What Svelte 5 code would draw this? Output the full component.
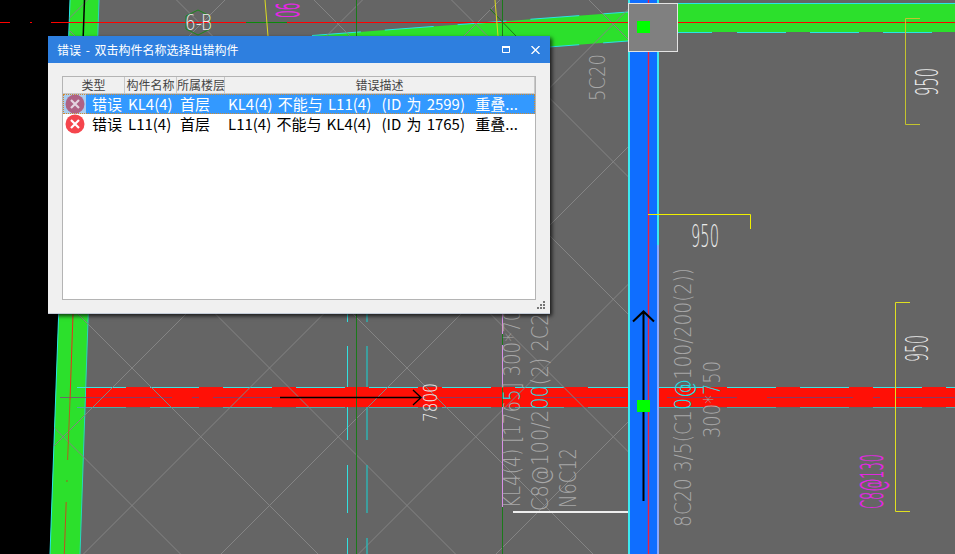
<script>
    const rows = [
        { name: "KL4(4)", floor: "首层", desc: "KL4(4) 不能与 L11(4)  (ID 为 2599)  重叠...", selected: true },
        { name: "L11(4)", floor: "首层", desc: "L11(4) 不能与 KL4(4)  (ID 为 1765)  重叠...", selected: false },
    ];

    // diagonal reinforcement lattice, 137.5px period
    const lattice = [];
    for (let k = -6; k <= 3; k++) {
        const c = 236 + 137.5 * k;
        lattice.push({ x1: 0, y1: c, x2: 700, y2: c + 700 });
    }
    for (let k = -3; k <= 7; k++) {
        const c = 500 + 137.5 * k;
        lattice.push({ x1: 0, y1: c, x2: 700, y2: c - 700 });
    }
</script>

<div class="stage">
    <svg class="drawing" viewBox="0 0 955 554" width="955" height="554">
        <defs>
            <clipPath id="left-of-column">
                <polygon points="70,0 628,0 628,554 50,554" />
            </clipPath>
        </defs>

        <rect width="955" height="554" fill="#656565" />
        <polygon points="0,0 70,0 50,554 0,554" fill="#000" />

        <!-- green beams -->
        <polygon points="70,0 99,0 80,554 50,554" fill="#2ce02c" />
        <line x1="70" y1="0" x2="50" y2="554" stroke="#27e6e6" />
        <line x1="99" y1="0" x2="80" y2="554" stroke="#27d8c0" />
        <polygon points="312,35.5 628,12 628,41 312,65" fill="#2ce02c" />
        <line x1="312" y1="35.5" x2="628" y2="12" stroke="#27e6e6" stroke-dasharray="49 24" />
        <line x1="312" y1="65" x2="628" y2="41" stroke="#27e6e6" stroke-dasharray="49 24" />
        <rect x="678" y="3" width="277" height="29" fill="#2ce02c" />
        <line x1="678" y1="3.5" x2="955" y2="3.5" stroke="#27e6e6" />
        <line x1="678" y1="32.5" x2="955" y2="32.5" stroke="#27e6e6" stroke-dasharray="34 25 49 24 49 24 49 24 49 24" />

        <!-- red beam -->
        <rect x="86" y="387" width="542" height="20" fill="#ff1006" />
        <rect x="659" y="387" width="296" height="20" fill="#ff1006" />
        <g stroke-dasharray="49 24">
            <line x1="77" y1="387.5" x2="628" y2="387.5" stroke="#3ce0e0" />
            <line x1="77" y1="407.5" x2="628" y2="407.5" stroke="#4ea8a8" />
            <line x1="654" y1="387.5" x2="955" y2="387.5" stroke="#3ce0e0" />
            <line x1="654" y1="407.5" x2="955" y2="407.5" stroke="#4ea8a8" />
        </g>
        <line x1="60" y1="397.5" x2="86" y2="397.5" stroke="#6a6a6a" />
        <line x1="86" y1="397.5" x2="955" y2="397.5" stroke="#8a3a60" stroke-dasharray="86 20 7 14 70 30" />

        <!-- lattice -->
        <g clip-path="url(#left-of-column)" stroke="#848484" stroke-width="1">
            {#each lattice as l}
                <line x1={l.x1} y1={l.y1} x2={l.x2} y2={l.y2} />
            {/each}
        </g>

        <!-- axis lines -->
        <line x1="0" y1="22.5" x2="10" y2="22.5" stroke="#f00" />
        <line x1="30" y1="22.5" x2="32" y2="22.5" stroke="#f00" />
        <line x1="51" y1="22.5" x2="628" y2="22.5" stroke="#f00" />
        <line x1="678" y1="22.5" x2="955" y2="22.5" stroke="#f00" />
        <line x1="246" y1="22.5" x2="287" y2="22.5" stroke="#0a8a0a" />
        <line x1="84.5" y1="0" x2="83.2" y2="36" stroke="#000" stroke-width="1.5" />
        <line x1="73" y1="314" x2="70" y2="400" stroke="#e8301c" />
        <line x1="70" y1="400" x2="67.6" y2="460" stroke="#b06020" />
        <line x1="67" y1="480" x2="66.9" y2="482" stroke="#a06020" />
        <line x1="66.2" y1="502" x2="64.3" y2="554" stroke="#c05020" />

        <line x1="356.5" y1="0" x2="356.5" y2="36" stroke="#1a7a1a" />
        <line x1="502.5" y1="0" x2="502.5" y2="36" stroke="#1a7a1a" />
        <line x1="490" y1="9" x2="516" y2="36" stroke="#1a7a1a" />
        <line x1="265" y1="0" x2="268" y2="36" stroke="#dcdc20" />
        <line x1="495" y1="0" x2="498" y2="36" stroke="#dcdc20" />
        <polygon points="198,10 210,16 210,29 198,35 186,29 186,16" fill="none" stroke="#1a8a1a" />

        <!-- dashed stirrup lines -->
        <g stroke="#33e0e0">
            <line x1="347.5" y1="314" x2="347.5" y2="322" />
            <line x1="347.5" y1="346" x2="347.5" y2="387" />
            <line x1="347.5" y1="407" x2="347.5" y2="440" />
            <line x1="347.5" y1="465" x2="347.5" y2="513" />
            <line x1="347.5" y1="538" x2="347.5" y2="554" />
        </g>
        <g stroke="#30b0b0" stroke-width="1.5">
            <line x1="367" y1="314" x2="367" y2="322" />
            <line x1="367" y1="346" x2="367" y2="387" />
            <line x1="367" y1="407" x2="367" y2="440" />
            <line x1="367" y1="465" x2="367" y2="513" />
            <line x1="367" y1="538" x2="367" y2="554" />
        </g>
        <line x1="356.5" y1="314" x2="356.5" y2="554" stroke="#1a7a1a" />
        <line x1="502.5" y1="314" x2="502.5" y2="554" stroke="#1a7a1a" />
        <line x1="502.5" y1="314" x2="502.5" y2="508" stroke="#d890e8" stroke-dasharray="20 11 42 20 100" />

        <!-- blue column -->
        <rect x="628" y="0" width="31" height="554" fill="#0f6eff" />
        <line x1="629" y1="0" x2="629" y2="554" stroke="#3ce8f0" stroke-width="2" />
        <line x1="658" y1="0" x2="658" y2="245" stroke="#3ce8f0" stroke-width="2" />
        <line x1="658" y1="245" x2="658" y2="554" stroke="#8aa8ff" stroke-width="2" />
        <line x1="648.5" y1="0" x2="648.5" y2="554" stroke="#f02040" stroke-width="1.4" />

        <rect x="628.5" y="3.5" width="49" height="48" fill="#808080" stroke="#e4e4e4" />
        <rect x="637" y="21" width="13" height="12" fill="#0f0" />

        <line x1="513" y1="512" x2="628" y2="512" stroke="#eee" stroke-width="2" />

        <!-- arrows -->
        <g fill="none" stroke="#000">
            <path d="M280 397.5H421M413 390l8 7.5-8 7.5" stroke-width="1.3" />
            <path d="M643.5 501V312M633 321.5l10.5-10 10.5 10" stroke-width="2" />
        </g>
        <rect x="637" y="400" width="13" height="12" fill="#0f0" />

        <!-- dimension brackets -->
        <path d="M920 18.5H905.5V124.5H920" fill="none" stroke="#c4c42e" />
        <path d="M910 302.5H895.5V511.5H910" fill="none" stroke="#e0e020" />
        <path d="M648 214.5H750.5V229" fill="none" stroke="#f0f000" />

        <!-- labels -->
        <text class="cad white" x="185" y="30" font-size="22" textLength="27" lengthAdjust="spacingAndGlyphs">6-B</text>
        <text class="cad white" x="691" y="247" font-size="32" textLength="28" lengthAdjust="spacingAndGlyphs">950</text>
        <text class="cad gray" transform="translate(605 101) rotate(-90)" font-size="22" textLength="47" lengthAdjust="spacingAndGlyphs">5C20</text>
        <text class="cad white" transform="translate(938 96) rotate(-90)" font-size="32" textLength="28" lengthAdjust="spacingAndGlyphs">950</text>
        <text class="cad white" transform="translate(928 362) rotate(-90)" font-size="32" textLength="27" lengthAdjust="spacingAndGlyphs">950</text>
        <text class="cad white" transform="translate(437 422) rotate(-90)" font-size="20" textLength="39" lengthAdjust="spacingAndGlyphs">7800</text>
        <text class="cad magenta" transform="translate(883 509) rotate(-90)" font-size="32" textLength="55" lengthAdjust="spacingAndGlyphs">C8@130</text>
        <text class="cad magenta" transform="translate(299 18) rotate(-90) scale(1 2.7)" font-size="12">06</text>
        <text class="cad gray" transform="translate(520 508) rotate(-90)" font-size="23" textLength="210" lengthAdjust="spacingAndGlyphs">KL4(4) [176<tspan class="cyan">5</tspan>] 300*700</text>
        <text class="cad gray" transform="translate(548 511) rotate(-90)" font-size="23" textLength="210" lengthAdjust="spacingAndGlyphs">C8@100/2<tspan class="cyan">00</tspan>(2) 2C22</text>
        <text class="cad gray" transform="translate(576 508) rotate(-90)" font-size="23" textLength="60" lengthAdjust="spacingAndGlyphs">N6C12</text>
        <text class="cad gray" transform="translate(691 527) rotate(-90)" font-size="23" textLength="259" lengthAdjust="spacingAndGlyphs">8C20 3/5(C1<tspan class="cyan">0@</tspan>100/200(2))</text>
        <text class="cad gray" transform="translate(720 438) rotate(-90)" font-size="23" textLength="77" lengthAdjust="spacingAndGlyphs">300*<tspan class="cyan">7</tspan>50</text>
    </svg>

    <div class="window">
        <div class="titlebar">
            <span class="title">错误 - 双击构件名称选择出错构件</span>
            <svg class="winbtn" viewBox="0 0 8 7" width="8" height="7">
                <path d="M.5 1.5h7v5h-7z" fill="none" stroke="#fff" />
                <rect width="8" height="2" fill="#fff" />
            </svg>
            <svg class="winbtn close" viewBox="0 0 9 8" width="9" height="8">
                <path d="M.5 0 8.5 8M8.5 0 .5 8" stroke="#fff" stroke-width="1.3" />
            </svg>
        </div>
        <div class="body">
            <div class="list">
                <div class="head">
                    <div class="th">类型</div>
                    <div class="th">构件名称</div>
                    <div class="th">所属楼层</div>
                    <div class="th">错误描述</div>
                </div>
                {#each rows as row}
                    <div class="row" class:selected={row.selected}>
                        <div class="icon-cell">
                            <svg viewBox="0 0 20 20" width="20" height="20">
                                <circle cx="10" cy="10" r="9.5" fill={row.selected ? "#ae6284" : "#f5454d"} />
                                <path d="M6 6l8 8M14 6l-8 8" stroke={row.selected ? "#e4d4e0" : "#fff"} stroke-width="2.2" />
                            </svg>
                        </div>
                        <div class="kind">错误</div>
                        <div class="name">{row.name}</div>
                        <div class="floor">{row.floor}</div>
                        <div class="desc">{row.desc}</div>
                    </div>
                {/each}
            </div>
            <svg class="grip" viewBox="0 0 9 9" width="9" height="9">
                <path d="M6 0h2v2H6zM3 3h2v2H3zM6 3h2v2H6zM0 6h2v2H0zM3 6h2v2H3zM6 6h2v2H6z" fill="#777" />
            </svg>
        </div>
    </div>
</div>

<style>
    :global(body) {
        background: #656565;
    }

    .stage {
        position: relative;
        width: 955px;
        height: 554px;
        overflow: hidden;
    }

    .drawing {
        position: absolute;
        left: 0;
        top: 0;
    }

    .cad {
        font-family: "DejaVu Sans", sans-serif;
        font-weight: 200;
    }

    .white {
        fill: #ececec;
    }

    .gray {
        fill: #a8a8a8;
    }

    .magenta {
        fill: #f020f0;
        stroke: #f020f0;
        stroke-width: 0.3;
    }

    .cyan {
        fill: #22e0e8;
    }

    .window {
        position: absolute;
        left: 48px;
        top: 36px;
        width: 502px;
        height: 278px;
        display: flex;
        flex-direction: column;
        background: #f0f0f0;
        box-shadow: 2px 2px 4px rgba(0, 0, 0, 0.75);
        font-family: "Noto Sans CJK SC", "Noto Sans", sans-serif;
    }

    .titlebar {
        height: 27px;
        flex: none;
        display: flex;
        align-items: center;
        padding: 0 10px 0 9px;
        background: #2e7fdf;
        color: #fff;
        font-size: 12px;
        word-spacing: 2px;
    }

    .title {
        flex: 1;
    }

    .winbtn.close {
        margin-left: 21px;
    }

    .body {
        flex: 1;
        position: relative;
        display: flex;
        padding: 13px 14px 13px 14px;
        border: solid #c4ccd8;
        border-width: 0 0 1px 0;
    }

    .list {
        flex: 1;
        background: #fff;
        border: 1px solid #b4b4b4;
    }

    .head {
        display: grid;
        grid-template-columns: 62px 52px 48px 1fr;
        height: 16px;
        background: #f0f0f0;
        border-bottom: 1px solid #c8c8c8;
    }

    .th {
        font-size: 12px;
        line-height: 16px;
        color: #444;
        text-align: center;
        white-space: nowrap;
        border-right: 1px solid #c8c8c8;
    }

    .row {
        display: grid;
        grid-template-columns: 23px 36px 52px 48px 1fr;
        height: 20px;
        font-size: 15px;
        line-height: 20px;
        color: #000;
        white-space: pre;
        word-spacing: 1.8px;
    }

    .row.selected {
        background: #3399ff;
        color: #fff;
        outline: 1px dotted #d08a30;
        outline-offset: -1px;
    }

    .icon-cell {
        display: flex;
        align-items: center;
        padding-left: 2px;
        height: 20px;
    }

    .row.selected .icon-cell {
        background: #a8cdf0;
    }

    .kind {
        padding-left: 6px;
    }

    .name {
        padding-left: 6px;
    }

    .floor {
        padding-left: 6px;
    }

    .desc {
        padding-left: 6px;
    }

    .grip {
        position: absolute;
        right: 4px;
        bottom: 3px;
    }
</style>
